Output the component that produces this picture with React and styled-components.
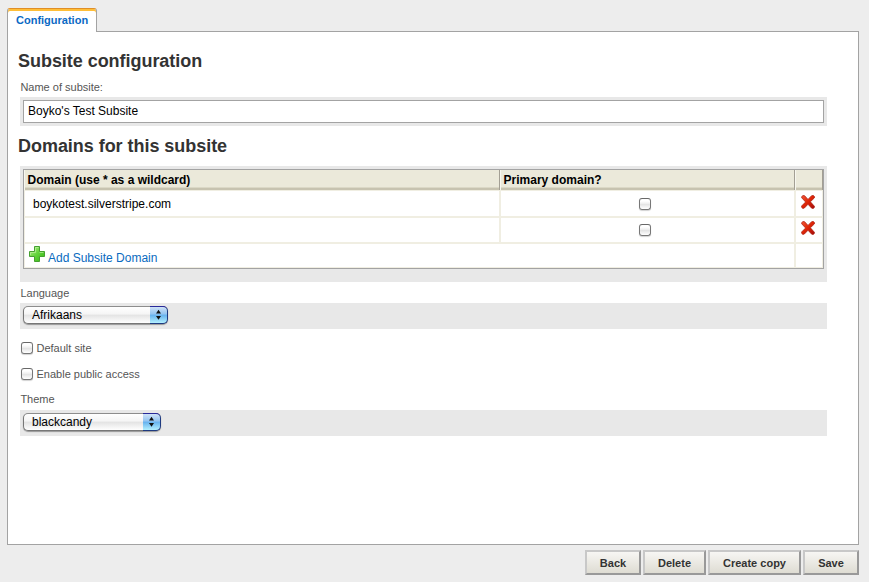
import React from "react";
import styled, { createGlobalStyle } from "styled-components";

const GlobalStyle = createGlobalStyle`
  * { box-sizing: border-box; }
  body {
    margin: 0;
    background: #ededed;
    font-family: "Liberation Sans", Arial, sans-serif;
    font-size: 12px;
    color: #000;
  }
`;

const Page = styled.div`
  height: 582px;
  padding: 8px 10px 0 7px;
  display: flex;
  flex-direction: column;
  overflow: hidden;
`;

const TabBar = styled.nav`
  display: flex;
  height: 24px;
  margin-bottom: -1px;
  z-index: 1;
`;

const Tab = styled.a`
  width: 90px;
  height: 24px;
  border: 1px solid #a3a3a3;
  border-top: 1px solid #e08f28;
  border-bottom: 0;
  border-radius: 3px 3px 0 0;
  box-shadow: inset 0 2px #ffbe38;
  background: #fff;
  color: #0a69c4;
  font-size: 11px;
  font-weight: bold;
  line-height: 22px;
  padding-left: 8px;
  white-space: nowrap;
`;

const Panel = styled.main`
  height: 514px;
  width: 852px;
  flex: none;
  border: 1px solid #a3a3a3;
  background: #fff;
  padding: 0 31px 0 12px;
`;

const Heading = styled.h2`
  margin: 0 0 0 -2px;
  height: ${(p) => p.$height}px;
  padding-top: ${(p) => p.$top}px;
  font-size: 18px;
  line-height: 22px;
  color: #333;
  white-space: nowrap;
  letter-spacing: -0.04px;
`;

const Label = styled.div`
  height: ${(p) => p.$height}px;
  padding-top: ${(p) => p.$top || 0}px;
  padding-left: 0.4px;
  font-size: 11px;
  line-height: 15px;
  color: #555;
`;

const Field = styled.div`
  width: 807px;
  height: ${(p) => p.$height}px;
  padding: 3px;
  background: #e8e8e8;
`;

const TextInput = styled.input`
  display: block;
  width: 801px;
  height: 23px;
  margin: 0;
  padding: 0 4px 2px;
  border: 1px solid #a3a3a3;
  border-radius: 0;
  outline: 0;
  background: #fff;
  color: #000;
  font: 12px "Liberation Sans", Arial, sans-serif;
`;

const Table = styled.div`
  width: 801px;
  height: 100px;
  border: 1px solid #a3a3a3;
  background: #fff;
`;

const Row = styled.div`
  display: grid;
  grid-template-columns: ${(p) => (p.$wide ? "771px 28px" : "476px 295px 28px")};
  height: ${(p) => p.$height}px;
`;

const HeadCell = styled.div`
  height: 20px;
  padding-left: 3.6px;
  border-right: 1px solid #a39f94;
  box-shadow: inset 1px 0 #f8f7ef;
  background: linear-gradient(#ebe9da 0 17px, #dbd8c6 17px 18px, #c7c3b0 18px 20px);
  font-weight: bold;
  line-height: 20px;
  white-space: nowrap;
`;

const Cell = styled.div`
  display: flex;
  align-items: flex-start;
  justify-content: ${(p) => (p.$center ? "center" : "flex-start")};
  padding: ${(p) => p.$pad || "0"};
  border: 1px solid #f0eee2;
  line-height: 14px;
  white-space: nowrap;
`;

const Check = styled.input`
  appearance: none;
  flex: none;
  width: 12px;
  height: 12px;
  margin: 0;
  border: 1px solid #777;
  border-top-color: #686868;
  border-radius: 3px;
  background: linear-gradient(#fff 0 20%, #ececec 50%, #e2e2e2 51%, #fff 100%);
  box-shadow: 0 1px 1px rgba(0, 0, 0, 0.18);
`;

const CheckRow = styled.label`
  display: flex;
  align-items: flex-start;
  gap: 3.5px;
  height: 26px;
  padding-left: 1px;
  font-size: 11px;
  line-height: 13px;
  color: #555;
`;

const Checks = styled.div`
  height: 63px;
  padding-top: 13px;
`;

const AddLink = styled.a`
  display: flex;
  gap: 3px;
  color: #0a6bc0;

  span { padding-top: 5px; }
`;

const SelectBox = styled.button`
  display: flex;
  align-items: stretch;
  width: ${(p) => p.$width}px;
  height: 18px;
  margin: 0;
  padding: 0;
  border: 1px solid #777;
  border-top-color: #8d8d8d;
  border-right: 0;
  border-radius: 5px;
  background: linear-gradient(#fff 0, #f5f5f5 45%, #e3e3e3 50%, #fff 100%);
  box-shadow: 0 1px 1px rgba(0, 0, 0, 0.35);
  color: #000;
  font: 12px "Liberation Sans", Arial, sans-serif;
  text-align: left;
`;

const SelectText = styled.span`
  flex: 1;
  padding-left: 8px;
  line-height: 16px;
`;

const SelectArrows = styled.span`
  width: 18px;
  margin: -1px 0;
  border: 1px solid #1e3a80;
  border-top-color: #29299a;
  border-left: 0;
  border-radius: 0 5px 5px 0;
  background: linear-gradient(#cfe2f7 0, #91c3f1 45%, #65b1ee 50%, #b3f0ff 100%);

  svg { display: block; }
`;

const Actions = styled.footer`
  display: flex;
  justify-content: flex-end;
  gap: 2px;
  padding-top: 5px;
`;

const Action = styled.button`
  width: ${(p) => p.$width}px;
  height: 25px;
  margin: 0;
  padding: 1px 0 0;
  border: 2px solid;
  border-color: #c8c8c8 #999 #999 #c8c8c8;
  background: linear-gradient(#f7f6f3, #dedcd3);
  color: #333;
  font: bold 11px "Liberation Sans", Arial, sans-serif;
  white-space: nowrap;
`;

const DeleteIcon = () => (
  <svg width="14" height="14" viewBox="0 0 14 14" aria-label="Delete">
    <defs>
      <linearGradient id="red" x2="1" y2="1">
        <stop stopColor="#f35a3a" />
        <stop offset=".45" stopColor="#e22808" />
        <stop offset="1" stopColor="#a40b0b" />
      </linearGradient>
    </defs>
    <path
      d="M.5 1.8 2 .5 3.6.7 7 4.4 10.6.7 12.4.4 13.6 1.8 13.3 3 9.4 6.8 13.2 11 13.6 12.2 12.2 13.5 10.7 13.2 7 9.3 3.4 13 1.9 13.5.5 12.2.8 10.8 4.6 7 .9 3Z"
      fill="url(#red)"
      stroke="#a81708"
      strokeWidth=".7"
    />
  </svg>
);

const PlusIcon = () => (
  <svg width="16" height="16" viewBox="0 0 16 16" aria-hidden="true">
    <defs>
      <linearGradient id="green" x2="1" y2="1">
        <stop stopColor="#b5f28e" />
        <stop offset=".5" stopColor="#62d33b" />
        <stop offset="1" stopColor="#36b515" />
      </linearGradient>
    </defs>
    <path
      d="M5.5.5h5v5h5v5h-5v5h-5v-5h-5v-5h5Z"
      fill="url(#green)"
      stroke="#45a02f"
      strokeLinejoin="round"
    />
    <path d="M6.5 6.5v-5h3M1.5 9V6.5h5M10.5 6.5h4" fill="none" stroke="#c2f5a5" strokeOpacity=".65" />
  </svg>
);

const Select = ({ width, children }) => (
  <SelectBox $width={width}>
    <SelectText>{children}</SelectText>
    <SelectArrows>
      <svg width="17" height="16" viewBox="0 0 17 16">
        <path d="M8.5 2.8 11 6.5H6ZM8.5 12.7 6 9h5Z" fill="#111" />
      </svg>
    </SelectArrows>
  </SelectBox>
);

const DomainRow = ({ name, height, top }) => (
  <Row $height={height}>
    <Cell $pad={`${top - 1}px 8px 0`}>{name}</Cell>
    <Cell $center $pad={`${top}px 6px 0 0`}>
      <Check type="checkbox" aria-label="Primary domain" />
    </Cell>
    <Cell $pad={`${top - 3}px 0 0 5px`}>
      <DeleteIcon />
    </Cell>
  </Row>
);

export default function App() {
  return (
    <Page>
      <GlobalStyle />
      <TabBar>
        <Tab>Configuration</Tab>
      </TabBar>
      <Panel>
        <Heading $height={48} $top={18}>Subsite configuration</Heading>
        <Label $height={17}>Name of subsite:</Label>
        <Field $height={29}>
          <TextInput defaultValue="Boyko's Test Subsite" />
        </Field>
        <Heading $height={40} $top={9}>Domains for this subsite</Heading>
        <Field $height={116}>
          <Table>
            <Row $height={20}>
              <HeadCell>Domain (use * as a wildcard)</HeadCell>
              <HeadCell>Primary domain?</HeadCell>
              <HeadCell />
            </Row>
            <DomainRow name="boykotest.silverstripe.com" height={27} top={7} />
            <DomainRow name="" height={26} top={6} />
            <Row $wide $height={25}>
              <Cell $pad="2px 0 0 4px">
                <AddLink>
                  <PlusIcon />
                  <span>Add Subsite Domain</span>
                </AddLink>
              </Cell>
              <Cell />
            </Row>
          </Table>
        </Field>
        <Label $height={21} $top={4}>Language</Label>
        <Field $height={26}>
          <Select width={145}>Afrikaans</Select>
        </Field>
        <Checks>
          <CheckRow><Check type="checkbox" />Default site</CheckRow>
          <CheckRow><Check type="checkbox" />Enable public access</CheckRow>
        </Checks>
        <Label $height={18}>Theme</Label>
        <Field $height={26}>
          <Select width={138}>blackcandy</Select>
        </Field>
      </Panel>
      <Actions>
        <Action $width={56}>Back</Action>
        <Action $width={63}>Delete</Action>
        <Action $width={93}>Create copy</Action>
        <Action $width={56}>Save</Action>
      </Actions>
    </Page>
  );
}
